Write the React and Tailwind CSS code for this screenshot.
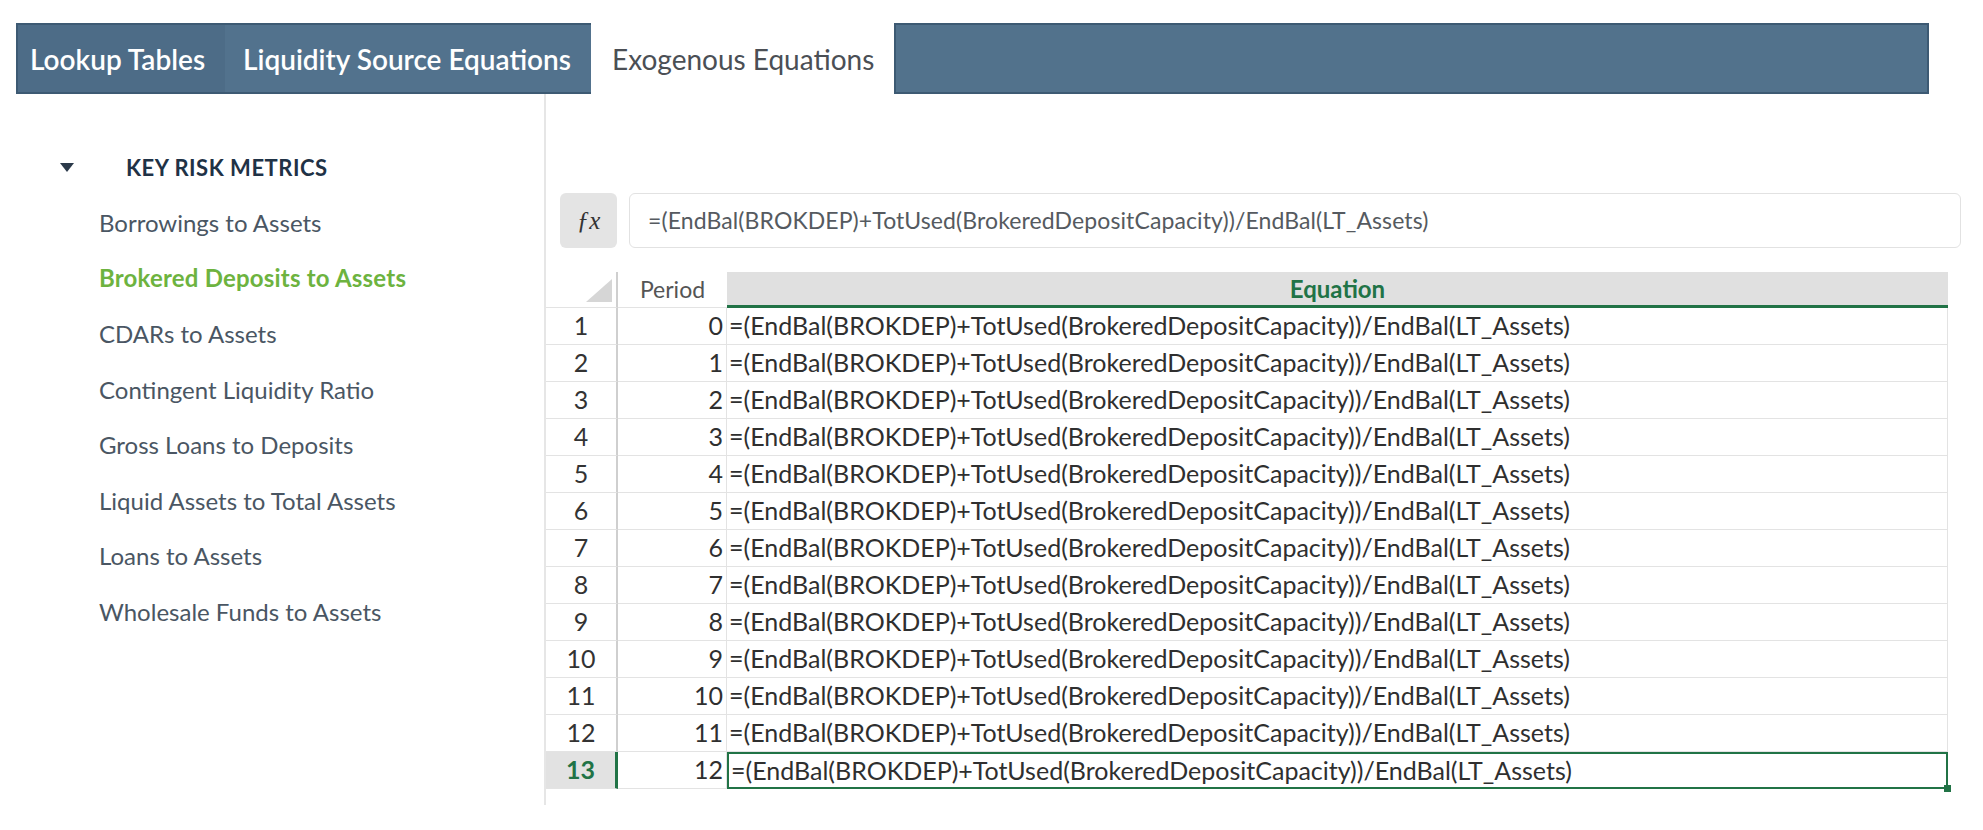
import React from 'react'

const EQ = '=(EndBal(BROKDEP)+TotUsed(BrokeredDepositCapacity))/EndBal(LT_Assets)'

const METRICS = [
  'Borrowings to Assets',
  'Brokered Deposits to Assets',
  'CDARs to Assets',
  'Contingent Liquidity Ratio',
  'Gross Loans to Deposits',
  'Liquid Assets to Total Assets',
  'Loans to Assets',
  'Wholesale Funds to Assets',
]

const SELECTED = 'Brokered Deposits to Assets'

function TabBar() {
  return (
    <div className="ml-[16px] mt-[23px] flex h-[71px] w-[1913px] text-[28px]">
      <div className="flex w-[209px] items-center border-y-2 border-l-2 border-[#3d5a73] bg-[#4d6c87] pl-[12px] font-semibold text-white">
        Lookup Tables
      </div>
      <div className="flex w-[366px] items-center border-y-2 border-[#3d5a73] bg-[#52728d] pl-[18px] font-semibold text-white">
        Liquidity Source Equations
      </div>
      <div className="flex w-[303px] items-center bg-white pl-[21px] text-[#4b4f55]">
        Exogenous Equations
      </div>
      <div className="flex-1 border-2 border-[#3d5a73] bg-[#52728c]" />
    </div>
  )
}

function Sidebar() {
  return (
    <div className="w-[544px] shrink-0 pt-[58px]">
      <div className="flex h-[30px] items-center">
        <svg width="14" height="9" viewBox="0 0 14 9" className="ml-[60px]">
          <path d="M0 0 L14 0 L7 9 Z" fill="#2b3a4a" />
        </svg>
        <span className="ml-[52px] text-[22px] font-bold tracking-[0.5px] text-[#1f3246]">
          KEY RISK METRICS
        </span>
      </div>
      <ul className="mt-[13px]">
        {METRICS.map((m) => (
          <li
            key={m}
            className={`flex h-[55.6px] items-center pl-[99px] text-[24px] ${
              m === SELECTED
                ? 'font-bold tracking-[0.2px] text-[#6db33f]'
                : 'text-[#4a5663]'
            }`}
          >
            {m}
          </li>
        ))}
      </ul>
    </div>
  )
}

function FormulaBar() {
  return (
    <div className="ml-[14px] mt-[99px] flex h-[55px] gap-[12px]">
      <div className="flex w-[57px] items-center justify-center rounded-md bg-[#e4e4e4] font-['Liberation_Serif'] text-[25px] italic text-[#333]">
        ƒx
      </div>
      <div className="flex w-[1332px] items-center rounded-md border border-[#e2e2e2] pl-[18px] text-[23px] tracking-[0.1px] text-[#555a60]">
        {EQ}
      </div>
    </div>
  )
}

function Grid() {
  const rows = Array.from({ length: 13 }, (_, i) => i)
  return (
    <div className="mt-[24px] grid w-[1404px] grid-cols-[72px_109px_1221px] text-[25px] text-[#2f2f2f]">
      <div className="relative h-[36px] border-r-2 border-b border-[#cfcfcf] border-b-[#e3e3e3]">
        <svg width="26" height="23" viewBox="0 0 26 23" className="absolute right-[4px] bottom-[5px]">
          <path d="M26 0 L26 23 L0 23 Z" fill="#d6d6d6" />
        </svg>
      </div>
      <div className="flex h-[36px] items-center justify-center border-b border-[#e3e3e3] text-[23px] text-[#555]">
        Period
      </div>
      <div className="flex h-[36px] items-center justify-center border-b-[3px] border-[#217346] bg-[#e0e0e0] text-[24px] font-bold text-[#217346]">
        Equation
      </div>
      {rows.map((i) => {
        const sel = i === 12
        return (
          <React.Fragment key={i}>
            <div
              className={`flex h-[37px] items-center justify-center border-b border-[#e3e3e3] ${
                sel
                  ? 'border-r-[3px] border-r-[#217346] bg-[#e2e2e2] font-bold text-[#217346]'
                  : 'border-r-2 border-r-[#cfcfcf] text-[#333]'
              }`}
            >
              {i + 1}
            </div>
            <div className="flex h-[37px] items-center justify-end border-b border-r border-[#e3e3e3] pr-[3px]">
              {i}
            </div>
            <div
              className={`relative flex h-[37px] items-center pl-[2px] ${
                sel
                  ? 'border-2 border-[#217346]'
                  : 'border-b border-r border-[#e3e3e3]'
              }`}
            >
              {EQ}
              {sel ? (
                <span className="absolute -right-[5px] -bottom-[5px] h-[7px] w-[7px] bg-[#217346]" />
              ) : null}
            </div>
          </React.Fragment>
        )
      })}
    </div>
  )
}

export default function App() {
  return (
    <div className="relative h-[830px] w-[1983px] overflow-hidden bg-white font-['Lato',sans-serif]">
      <TabBar />
      <div className="flex">
        <Sidebar />
        <div className="h-[711px] border-l-2 border-[#e6e6e6]">
          <FormulaBar />
          <Grid />
        </div>
      </div>
    </div>
  )
}
